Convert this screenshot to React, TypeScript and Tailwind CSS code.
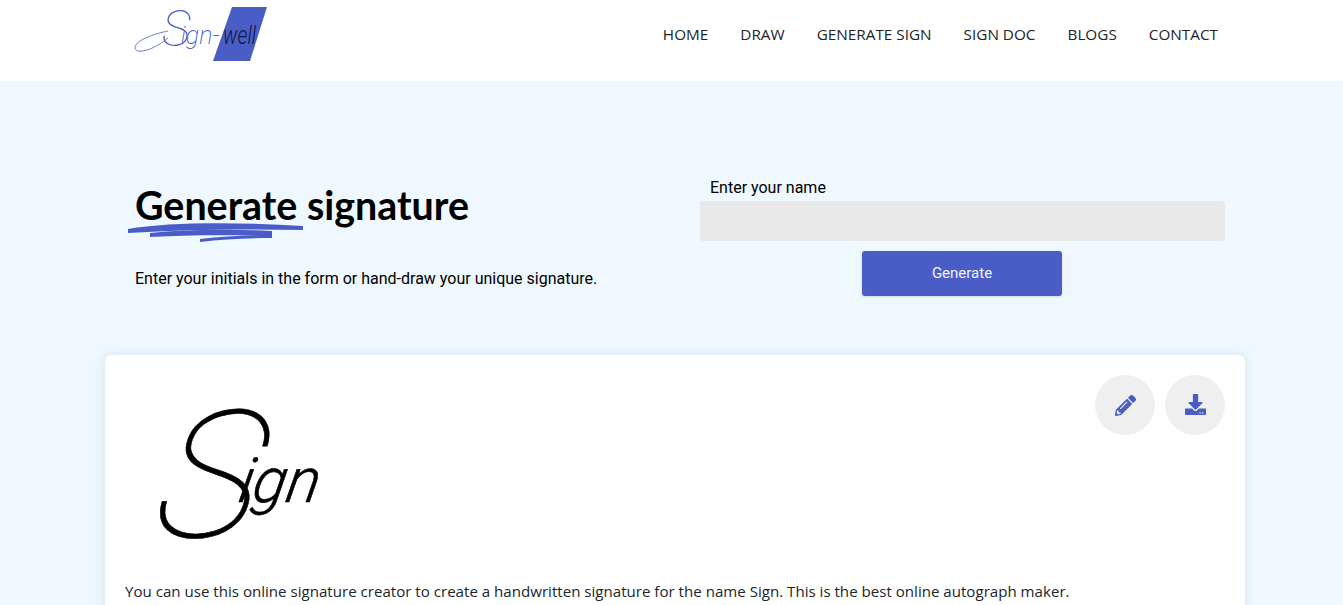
import { FaDownload, FaPencilAlt } from "react-icons/fa";

const navItems = ["HOME", "DRAW", "GENERATE SIGN", "SIGN DOC", "BLOGS", "CONTACT"];

function Logo() {
  return (
    <svg width="140" height="62" viewBox="0 0 140 62" className="block overflow-visible">
      <polygon points="100,7 135,7 118,61 81,61" fill="#4a5dc7" />
      {/* swash under the initial */}
      <path d="M36 31 C22 34 3 40 3 48 C4 55 22 50 36 38" fill="none" stroke="#4a5dc7" strokeWidth="0.8" />
      <text x="30" y="46" fill="#4a5dc7" fontFamily="Roboto, sans-serif" fontStyle="italic" fontWeight="200">
        <tspan fontSize="50" fontWeight="100">S</tspan>
        <tspan dx="-10" dy="-2" fontSize="25">ign-</tspan>
      </text>
      <text x="91" y="44" fill="#10163f" fontFamily="Roboto, sans-serif" fontStyle="italic" fontWeight="300" fontSize="26" textLength="33" lengthAdjust="spacingAndGlyphs">well</text>
    </svg>
  );
}

function BrushUnderline() {
  return (
    <svg width="178" height="22" viewBox="0 0 178 22" className="absolute left-[-7px] top-[43px]">
      <path d="M0 8 C40 1 110 1 175 5 L175 9 C120 8 60 8 0 12 Z" fill="#4a5dc7" />
      <path d="M22 12 C60 8 100 8 144 10 L144 15 C100 14 60 14 22 16 Z" fill="#4a5dc7" />
      <path d="M72 18 C95 15 120 14 144 14 L144 17 C120 17 95 18 72 21 Z" fill="#4a5dc7" />
    </svg>
  );
}

function Signature() {
  return (
    <svg width="190" height="150" viewBox="0 0 190 150" className="block overflow-visible">
      <text x="39" y="143" transform="skewX(-10)" fill="#000" stroke="#000" strokeWidth="0.6" fontFamily="Roboto, sans-serif" fontStyle="italic">
        <tspan fontSize="178" fontWeight="100">S</tspan>
        <tspan dx="-22" dy="-35" fontSize="62" fontWeight="300">ign</tspan>
      </text>
    </svg>
  );
}

export default function App() {
  return (
    <div className="h-[605px] overflow-hidden bg-[#eef8fe] font-['Roboto',sans-serif] text-black">
      {/* Header */}
      <header className="flex h-[81px] items-start bg-white pl-[132px] pr-[125px]">
        <Logo />
        <nav className="ml-auto flex gap-8 pt-[24px] font-['Open_Sans',sans-serif] text-[15.3px] leading-5 text-[#212529]">
          {navItems.map((item) => (
            <a key={item} href="#">
              {item}
            </a>
          ))}
        </nav>
      </header>

      {/* Form */}
      <section className="ml-[105px] flex w-[1140px] pt-[97px]">
        <div className="w-[595px] pl-[30px]">
          <div className="relative pt-[2px]">
            <h1 className="font-['Lato',sans-serif] text-[39.4px] font-bold leading-[50px]">Generate signature</h1>
            <BrushUnderline />
          </div>
          <p className="mt-[37px] text-base leading-6">Enter your initials in the form or hand-draw your unique signature.</p>
        </div>
        <div className="w-[525px]">
          <label className="block pl-[10px] text-base leading-[19px]">Enter your name</label>
          <input type="text" className="mt-[4px] block h-10 w-full rounded-[3px] bg-[#e8e8e8]" />
          <button className="ml-[162px] mt-[10px] block h-[45px] w-[200px] rounded-[3px] bg-[#4a5dc7] pb-[1px] text-[15px] text-[#f0f3ff] shadow-sm">Generate</button>
        </div>
      </section>

      {/* Signature card */}
      <section className="ml-[105px] mt-[59px] h-[400px] w-[1140px] rounded-md bg-white px-5 pt-5 shadow-[0_0_12px_rgba(60,80,120,0.15)]">
        <div className="flex items-start justify-between">
          <div className="pl-[12px] pt-[19px]">
            <Signature />
          </div>
          <div className="flex gap-[10px]">
            <button className="flex h-[60px] w-[60px] items-center justify-center rounded-full bg-[#efefef] text-[#4a5dc7]">
              <FaPencilAlt size={21} />
            </button>
            <button className="flex h-[60px] w-[60px] items-center justify-center rounded-full bg-[#efefef] pb-[1px] text-[#4a5dc7]">
              <FaDownload size={21} />
            </button>
          </div>
        </div>
        <p className="mt-[35px] font-['Open_Sans',sans-serif] text-[15.1px] leading-6 text-[#212529]">
          You can use this online signature creator to create a handwritten signature for the name Sign. This is the best online autograph maker.
        </p>
      </section>
    </div>
  );
}
